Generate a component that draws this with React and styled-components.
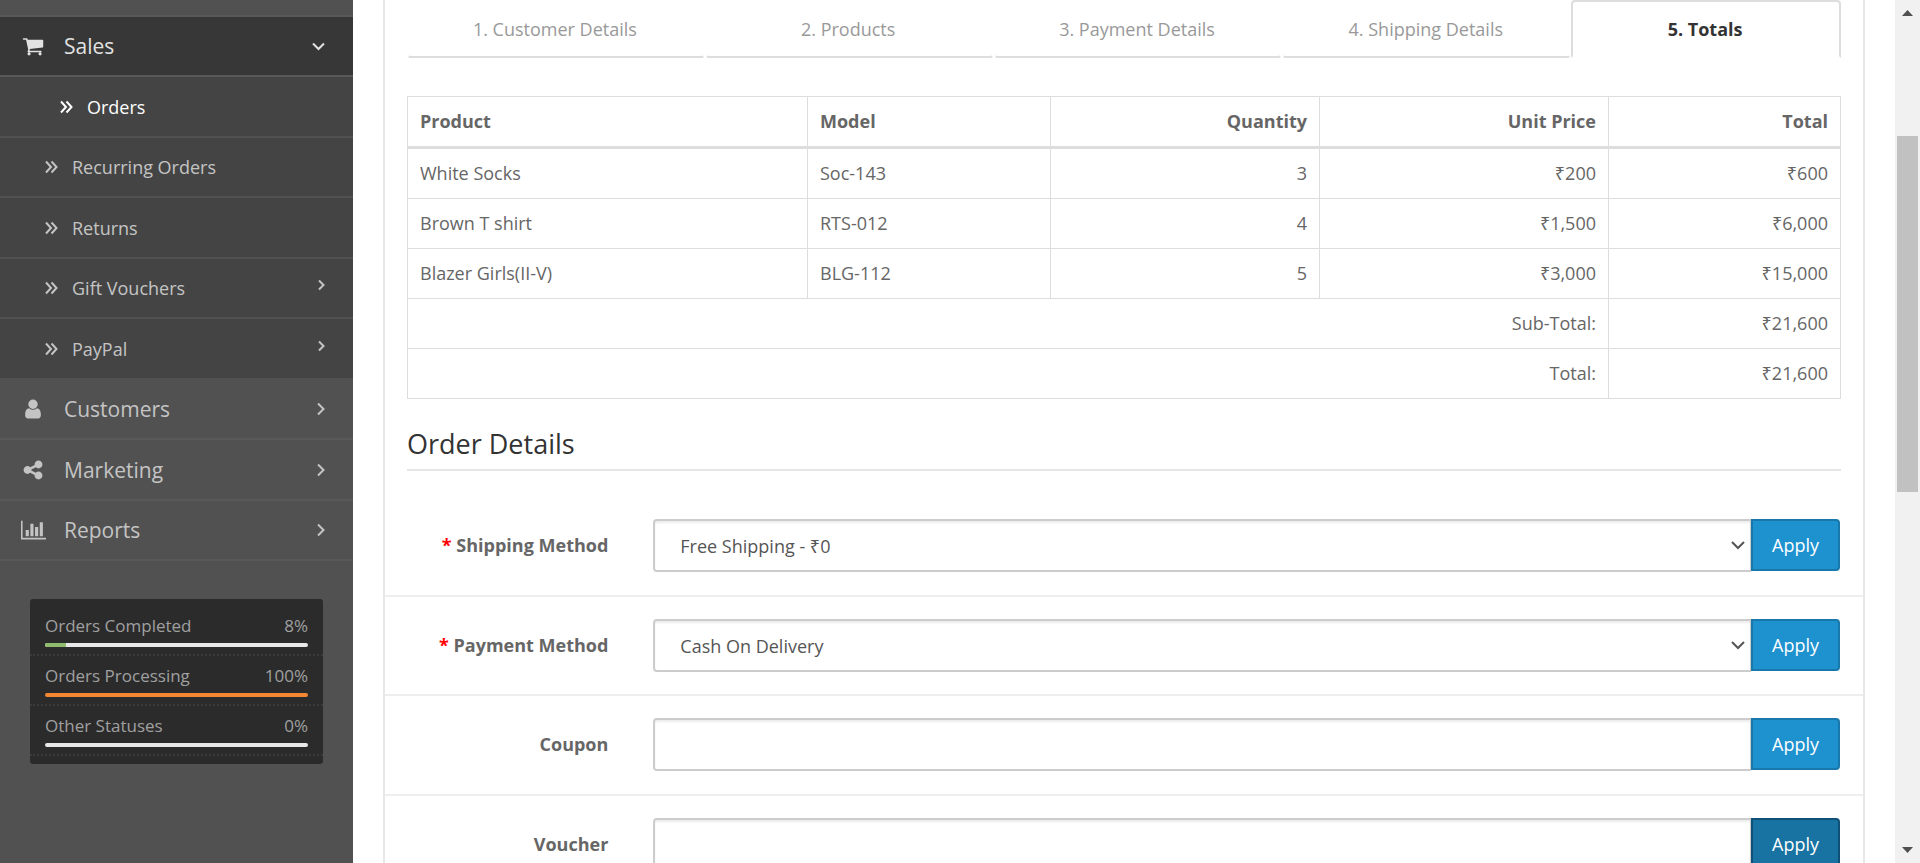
import React from 'react';
import styled, { createGlobalStyle, css } from 'styled-components';

const GlobalStyle = createGlobalStyle`
  *, *::before, *::after { box-sizing: border-box; }
  body {
    margin: 0;
    background: #fff;
    color: #666;
    font: 400 18px/26px "Open Sans", "Noto Sans", sans-serif;
  }
  button, input, select { font: inherit; }
`;

/* ---------- shell ---------- */

const Shell = styled.div`
  display: flex;
  height: 100vh;
  overflow: hidden;
`;

const Sidebar = styled.aside`
  flex: 0 0 353px;
  background: #515151;
`;

const Content = styled.main`
  flex: 1;
  min-width: 0;
  padding: 0 30px;
`;

const Panel = styled.section`
  min-height: 100%;
  border: solid #e8e8e8;
  border-width: 0 2px;
`;

const PanelBody = styled.div`
  padding: 0 22px;
`;

/* ---------- side navigation ---------- */

const NavList = styled.ul`
  margin: 0;
  padding: 0;
  list-style: none;
`;

const PreviousItem = styled.div`
  height: 17px;
  border-bottom: 2px solid #585858;
`;

const NavLink = styled.a`
  display: flex;
  align-items: center;
  height: ${(p) => (p.$tall ? 61 : 60)}px;
  padding: 0 28px 0 20px;
  border-bottom: 2px solid #585858;
  color: ${(p) => (p.$open ? '#e2e2e2' : '#c4c4c4')};
  background: ${(p) => (p.$open ? '#373737' : 'transparent')};
  font-size: 21px;
  text-decoration: none;
`;

const NavIcon = styled.span`
  display: flex;
  justify-content: center;
  width: 26px;
  margin-right: 18px;
`;

const NavText = styled.span`
  flex: 1;
`;

const SubList = styled(NavList)`
  background: #444;
`;

const SubLink = styled.a`
  display: flex;
  align-items: center;
  height: ${(p) => (p.$tall ? 61 : 60)}px;
  padding: 0 28px 0 ${(p) => (p.$active ? 60 : 45)}px;
  border-bottom: 2px solid #515151;
  color: ${(p) => (p.$active ? '#fff' : '#c4c4c4')};
  text-decoration: none;
`;

const SubIcon = styled.span`
  display: flex;
  width: 27px;
`;

const SubArrow = styled.span`
  display: flex;
  padding-bottom: 6px;
`;

const Glyph = ({ d, width = 22, box = '0 0 1792 1792' }) => (
  <svg width={width} height="22" viewBox={box} fill="currentColor" aria-hidden="true">
    <path d={d} />
  </svg>
);

const Stroke = ({ d, width, height, weight = 2 }) => (
  <svg width={width} height={height} viewBox={`0 0 ${width} ${height}`} fill="none" stroke="currentColor" strokeWidth={weight} aria-hidden="true">
    <path d={d} />
  </svg>
);

const CartIcon = () => (
  <Glyph d="M704 1536q0 52-38 90t-90 38-90-38-38-90 38-90 90-38 90 38 38 90zm896 0q0 52-38 90t-90 38-90-38-38-90 38-90 90-38 90 38 38 90zm128-1088v512q0 24-16.5 42.5t-40.5 21.5l-1044 122q13 60 13 70 0 16-24 64h920q26 0 45 19t19 45-19 45-45 19h-1024q-26 0-45-19t-19-45q0-11 8-31.5t16-36 21.5-40 15.5-29.5l-177-823h-204q-26 0-45-19t-19-45 19-45 45-19h256q16 0 28.5 6.5t19.5 15.5 13 24.5 8 26 5.5 29.5 4.5 26h1201q26 0 45 19t19 45z" />
);
const UserIcon = () => (
  <Glyph d="M1536 1399q0 109-62.5 187t-150.5 78h-854q-88 0-150.5-78t-62.5-187q0-85 8.5-160.5t31.5-152 58.5-131 94-89 134.5-34.5q131 128 313 128t313-128q76 0 134.5 34.5t94 89 58.5 131 31.5 152 8.5 160.5zm-256-887q0 159-112.5 271.5t-271.5 112.5-271.5-112.5-112.5-271.5 112.5-271.5 271.5-112.5 271.5 112.5 112.5 271.5z" />
);
const ShareIcon = () => (
  <Glyph d="M1344 1024q133 0 226.5 93.5t93.5 226.5-93.5 226.5-226.5 93.5-226.5-93.5-93.5-226.5q0-12 2-34l-360-180q-92 86-218 86-133 0-226.5-93.5t-93.5-226.5 93.5-226.5 226.5-93.5q126 0 218 86l360-180q-2-22-2-34 0-133 93.5-226.5t226.5-93.5 226.5 93.5 93.5 226.5-93.5 226.5-226.5 93.5q-126 0-218-86l-360 180q2 22 2 34t-2 34l360 180q92-86 218-86z" />
);
const ChartIcon = () => (
  <Glyph width={25} box="0 0 2048 1792" d="M640 896v512h-256v-512h256zm384-512v1024h-256v-1024h256zm1024 1152v128h-2048v-1536h128v1408h1920zm-640-896v768h-256v-768h256zm384-384v1152h-256v-1152h256z" />
);
const AngleRight = () => <Stroke width={8} height={14} d="M1 1.5 6.5 7 1 12.5" />;
const AngleRightSmall = () => <Stroke width={7} height={12} d="M1 1.5 5.5 6 1 10.5" />;
const AngleDown = () => <Stroke width={13} height={9} d="M1 1.5 6.5 7 12 1.5" />;
const DoubleAngle = () => <Stroke width={13} height={14} d="M1 1.5 6 7 1 12.5M6.5 1.5 11.5 7 6.5 12.5" />;

/* ---------- order statistics ---------- */

const Stats = styled.ul`
  margin: 38px 30px 0;
  padding: 7px 0 8px;
  border-radius: 3px;
  background: #2b2b2b;
  color: #a0a0a0;
  font-size: 17px;
  list-style: none;
`;

const Stat = styled.li`
  height: 50px;
  padding: 7px 15px 0;
  border-bottom: 2px dotted #3a3a3a;
`;

const StatHead = styled.div`
  display: flex;
  justify-content: space-between;
  line-height: 26px;
`;

const Track = styled.div`
  height: 4px;
  margin-top: 4px;
  overflow: hidden;
  border-radius: 2px;
  background: #e8e8e8;
`;

const Fill = styled.div`
  height: 100%;
  background: ${(p) => p.$color};
`;

/* ---------- tabs ---------- */

const Tabs = styled.nav`
  display: grid;
  grid-template-columns: 298fr 289fr 289fr 289fr 270fr;
  margin-bottom: 38px;
`;

const Tab = styled.a`
  height: 58px;
  padding-right: 2px;
  border: 2px solid transparent;
  border-bottom-color: #ddd;
  border-radius: 4px;
  color: #999;
  line-height: 54px;
  text-align: center;
  text-decoration: none;
  ${(p) =>
    p.$active &&
    css`
      border-color: #ddd #ddd transparent;
      border-radius: 4px 4px 0 0;
      color: #333;
      font-weight: 700;
    `}
`;

/* ---------- totals table ---------- */

const Table = styled.table`
  width: 100%;
  table-layout: fixed;
  border-collapse: collapse;
`;

const Col = styled.col`
  width: ${(p) => p.$w}px;
`;

const cell = css`
  height: 50px;
  padding: 0 12px 2px;
  border: 1px solid #ddd;
  text-align: ${(p) => (p.$right ? 'right' : 'left')};
`;

const Th = styled.th`
  ${cell}
  height: 51px;
  border-bottom-width: 3px;
  font-weight: 700;
`;

const Td = styled.td`
  ${cell}
  tbody tr:first-child & {
    height: 51px;
  }
`;

/* ---------- form ---------- */

const Legend = styled.h2`
  margin: 24px 0 26px;
  padding-top: 2px;
  padding-bottom: 6px;
  border-bottom: 2px solid #e5e5e5;
  color: #333;
  font-size: 27px;
  font-weight: 400;
  line-height: 38px;
`;

const FormRow = styled.div`
  display: grid;
  grid-template-columns: 1fr 5fr;
  align-items: start;
  height: ${(p) => (p.$tall ? 100 : 99)}px;
  padding-top: 22px;
  border-bottom: 2px solid #eee;
`;

const Label = styled.label`
  padding-right: 23px;
  font-weight: 700;
  line-height: 52px;
  text-align: right;
`;

const Star = styled.span`
  color: #f00;
`;

const Group = styled.div`
  display: flex;
  align-items: flex-start;
  padding: 0 23px 0 22px;
`;

const Holder = styled.div`
  position: relative;
  flex: 1;
  min-width: 0;
  color: #555;
`;

const control = css`
  display: block;
  width: 100%;
  height: 53px;
  padding: 0 25px;
  border: 2px solid #ccc;
  border-right-width: 1px;
  border-radius: 4px 0 0 4px;
  outline: 0;
  background: #fff;
  box-shadow: inset 0 2px 2px rgba(0, 0, 0, 0.075);
  color: #555;
`;

const Select = styled.select`
  ${control}
  appearance: none;
`;

const Input = styled.input`
  ${control}
`;

const Caret = styled.span`
  position: absolute;
  top: 22px;
  right: 6px;
  display: flex;
  pointer-events: none;
`;

const Apply = styled.button`
  width: 89px;
  height: 52px;
  padding: 0;
  border: 2px solid ${(p) => (p.$pressed ? '#0f5078' : '#1978ab')};
  border-radius: 0 4px 4px 0;
  background: ${(p) => (p.$pressed ? '#1872a2' : '#1e91cf')};
  color: #fff;
`;

/* ---------- window scroll bar ---------- */

const ScrollBar = styled.div`
  display: flex;
  flex: 0 0 25px;
  flex-direction: column;
  align-items: center;
  justify-content: space-between;
  padding: 10px 0;
  background: #f1f1f1;
  color: #505050;
`;

const ScrollTrack = styled.div`
  flex: 1;
  align-self: stretch;
  padding: 120px 2px 0;
`;

const Thumb = styled.div`
  height: 356px;
  background: #c1c1c1;
`;

const Arrow = ({ d }) => (
  <svg width="11" height="6" viewBox="0 0 11 6" fill="currentColor" aria-hidden="true">
    <path d={d} />
  </svg>
);

/* ---------- data ---------- */

const subItems = [
  { label: 'Orders', active: true },
  { label: 'Recurring Orders' },
  { label: 'Returns' },
  { label: 'Gift Vouchers', more: true },
  { label: 'PayPal', more: true },
];

const mainItems = [
  { label: 'Customers', Icon: UserIcon },
  { label: 'Marketing', Icon: ShareIcon },
  { label: 'Reports', Icon: ChartIcon },
];

const stats = [
  { label: 'Orders Completed', value: 8, color: '#8fbb6c' },
  { label: 'Orders Processing', value: 100, color: '#f38733' },
  { label: 'Other Statuses', value: 0, color: '#e8e8e8' },
];

const tabs = ['1. Customer Details', '2. Products', '3. Payment Details', '4. Shipping Details', '5. Totals'];

const products = [
  ['White Socks', 'Soc-143', '3', '₹200', '₹600'],
  ['Brown T shirt', 'RTS-012', '4', '₹1,500', '₹6,000'],
  ['Blazer Girls(II-V)', 'BLG-112', '5', '₹3,000', '₹15,000'],
];

const totals = [
  ['Sub-Total:', '₹21,600'],
  ['Total:', '₹21,600'],
];

const fields = [
  { id: 'shipping', label: 'Shipping Method', required: true, option: 'Free Shipping - ₹0' },
  { id: 'payment', label: 'Payment Method', required: true, option: 'Cash On Delivery' },
  { id: 'coupon', label: 'Coupon' },
  { id: 'voucher', label: 'Voucher', pressed: true },
];

export default function App() {
  return (
    <>
      <GlobalStyle />
      <Shell>
        <Sidebar>
          <PreviousItem />
          <NavList>
            <li>
              <NavLink href="#sales" $open>
                <NavIcon><CartIcon /></NavIcon>
                <NavText>Sales</NavText>
                <AngleDown />
              </NavLink>
              <SubList>
                {subItems.map((item, i) => (
                  <li key={item.label}>
                    <SubLink href="#sales" $active={item.active} $tall={i % 2 === 0}>
                      <SubIcon><DoubleAngle /></SubIcon>
                      <NavText>{item.label}</NavText>
                      {item.more && <SubArrow><AngleRightSmall /></SubArrow>}
                    </SubLink>
                  </li>
                ))}
              </SubList>
            </li>
            {mainItems.map(({ label, Icon }, i) => (
              <li key={label}>
                <NavLink href="#menu" $tall={i % 2 === 1}>
                  <NavIcon><Icon /></NavIcon>
                  <NavText>{label}</NavText>
                  <AngleRight />
                </NavLink>
              </li>
            ))}
          </NavList>
          <Stats>
            {stats.map((s) => (
              <Stat key={s.label}>
                <StatHead>
                  <span>{s.label}</span>
                  <span>{s.value}%</span>
                </StatHead>
                <Track>
                  <Fill $color={s.color} style={{ width: `${s.value}%` }} />
                </Track>
              </Stat>
            ))}
          </Stats>
        </Sidebar>

        <Content>
          <Panel>
            <PanelBody>
              <Tabs>
                {tabs.map((t, i) => (
                  <Tab key={t} href="#tab" $active={i === 4}>{t}</Tab>
                ))}
              </Tabs>
              <Table>
                <colgroup>
                  {[400, 243, 269, 289, 232].map((w) => <Col key={w} $w={w} />)}
                </colgroup>
                <thead>
                  <tr>
                    <Th>Product</Th>
                    <Th>Model</Th>
                    <Th $right>Quantity</Th>
                    <Th $right>Unit Price</Th>
                    <Th $right>Total</Th>
                  </tr>
                </thead>
                <tbody>
                  {products.map((row) => (
                    <tr key={row[0]}>
                      {row.map((v, i) => <Td key={i} $right={i > 1}>{v}</Td>)}
                    </tr>
                  ))}
                  {totals.map(([name, value]) => (
                    <tr key={name}>
                      <Td colSpan={4} $right>{name}</Td>
                      <Td $right>{value}</Td>
                    </tr>
                  ))}
                </tbody>
              </Table>
              <Legend>Order Details</Legend>
            </PanelBody>
            {fields.map((f, i) => (
              <FormRow key={f.id} $tall={i % 2 === 0}>
                <Label htmlFor={f.id}>
                  {f.required && <Star>* </Star>}
                  {f.label}
                </Label>
                <Group>
                  <Holder>
                    {f.option ? (
                      <>
                        <Select id={f.id}><option>{f.option}</option></Select>
                        <Caret><Stroke width={14} height={9} d="M1 1 7 7 13 1" /></Caret>
                      </>
                    ) : (
                      <Input id={f.id} type="text" />
                    )}
                  </Holder>
                  <Apply type="button" $pressed={f.pressed}>Apply</Apply>
                </Group>
              </FormRow>
            ))}
          </Panel>
        </Content>

        <ScrollBar aria-hidden="true">
          <Arrow d="M5.500 0 11 6H0Z" />
          <ScrollTrack><Thumb /></ScrollTrack>
          <Arrow d="M5.500 6 0 0H11Z" />
        </ScrollBar>
      </Shell>
    </>
  );
}
